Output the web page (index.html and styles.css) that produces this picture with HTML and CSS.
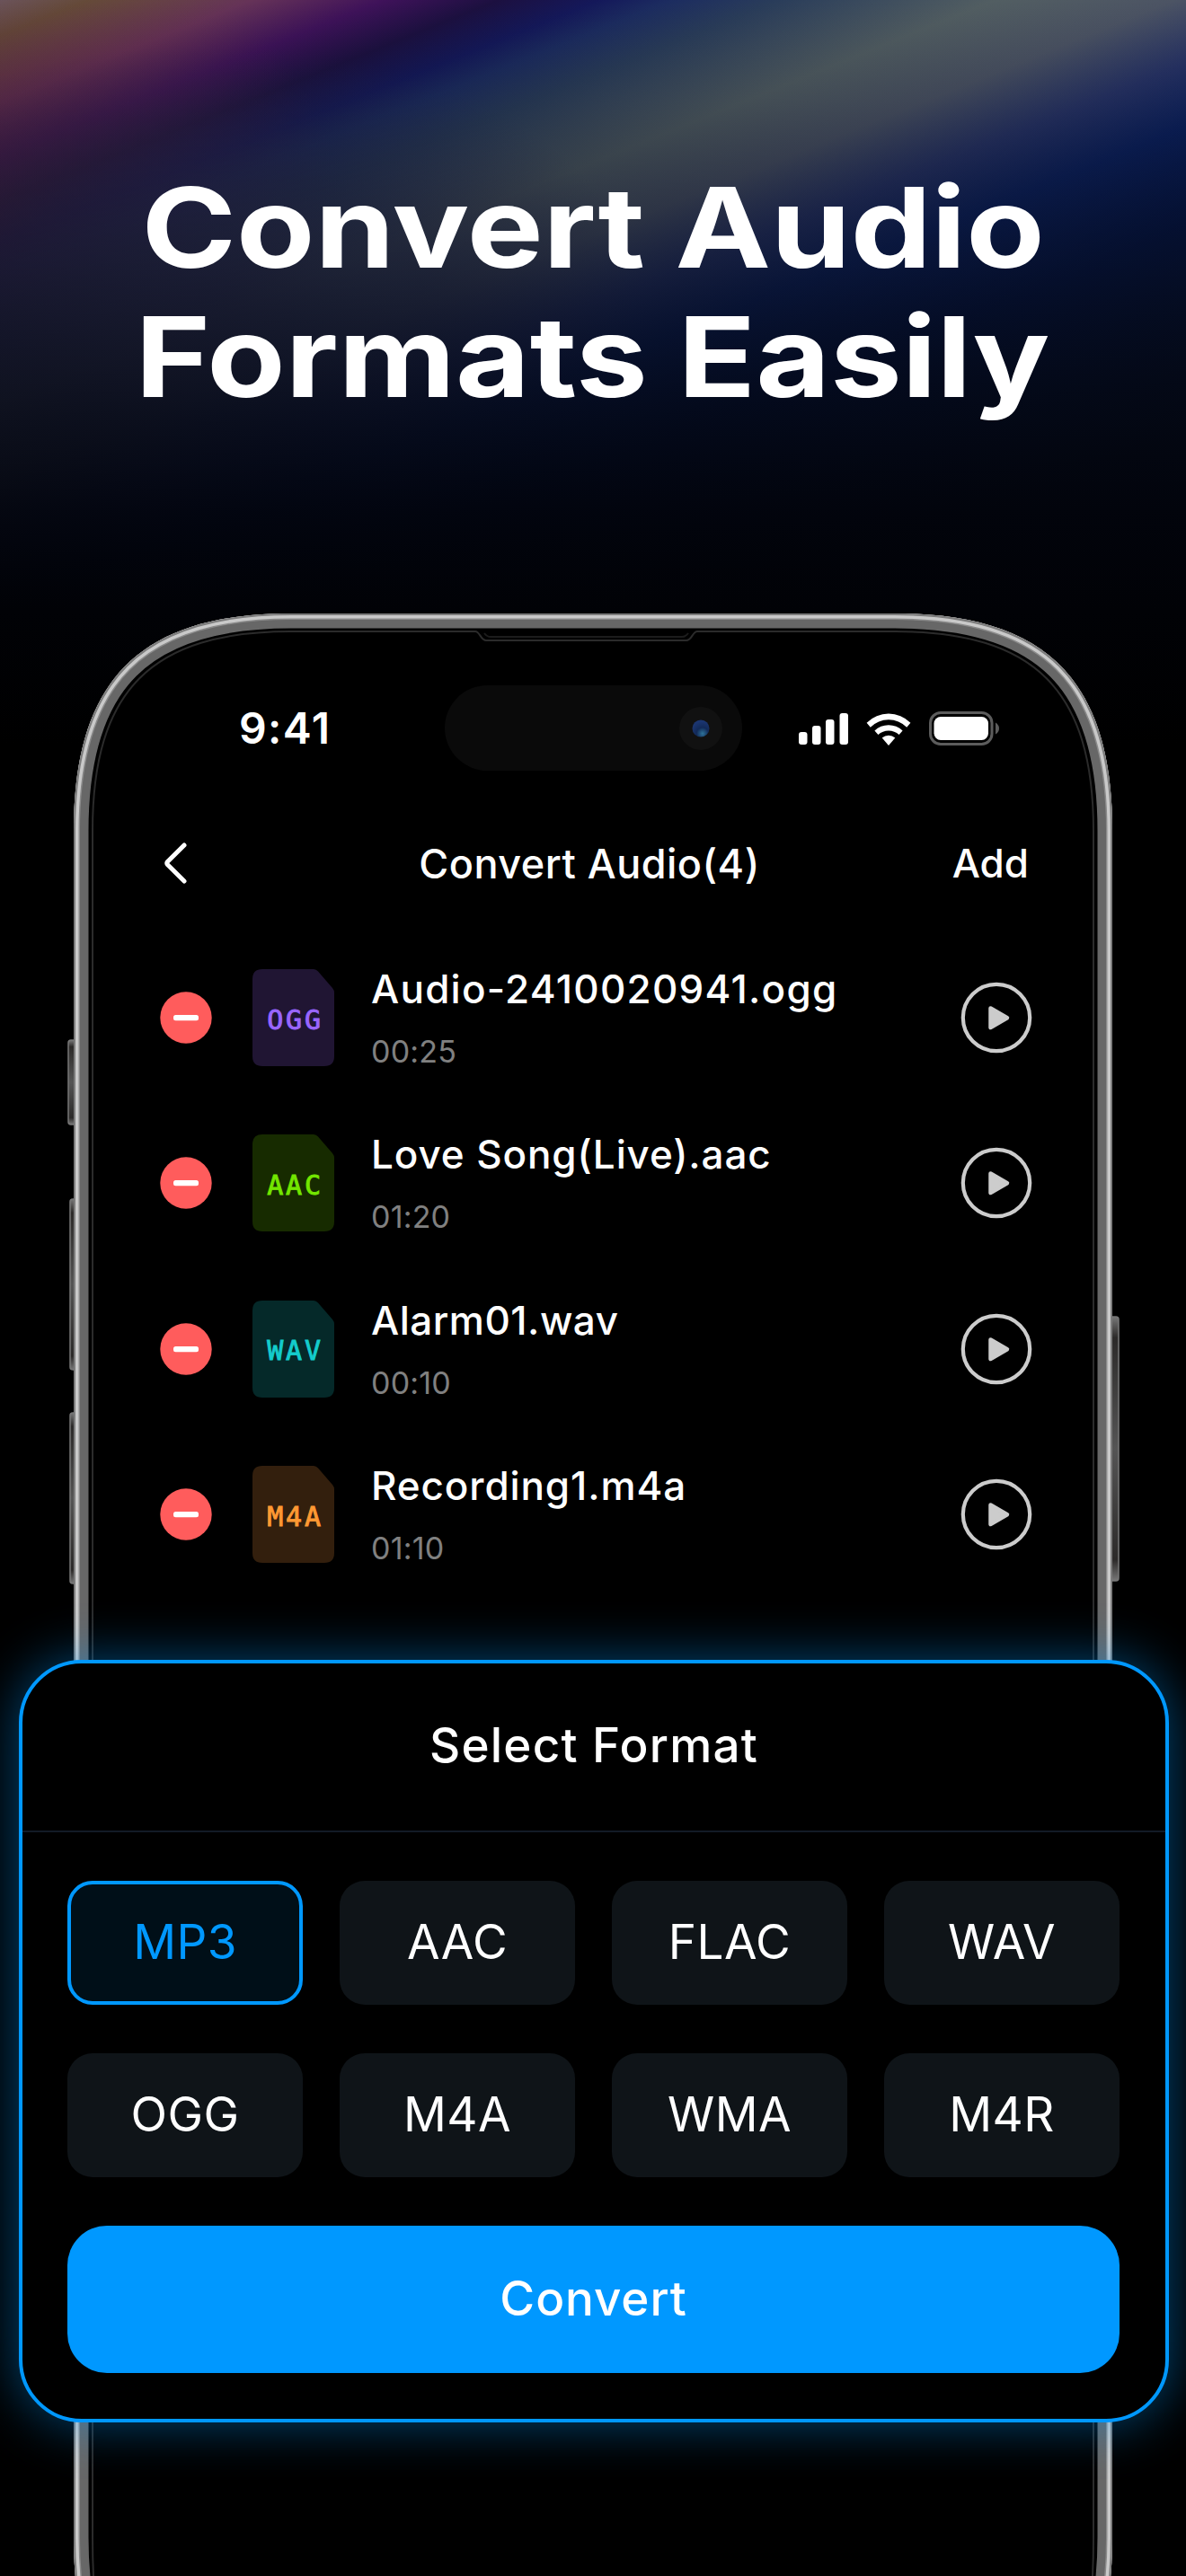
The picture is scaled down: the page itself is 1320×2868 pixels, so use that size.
FILE: index.html
```html
<!DOCTYPE html>
<html lang="en">
<head>
    <meta charset="utf-8">
    <title>Convert Audio Formats Easily</title>
    <link rel="stylesheet" href="styles.css">
</head>
<body>
    <div class="page">
        <h1 class="headline">
            <span class="line">Convert Audio</span>
            <span class="line">Formats Easily</span>
        </h1>

        <main class="phone">
            <svg class="frame" viewBox="0 0 1176 2185" width="1176" height="2185" fill="none">
                <defs>
                    <path id="body" d="M10 242 C10 74 84 0 252 0 H924 C1092 0 1166 74 1166 242 V2142 C1166 2310 1092 2384 924 2384 H252 C84 2384 10 2310 10 2142 Z"/>
                    <clipPath id="bodyClip"><use href="#body"/></clipPath>
                    <linearGradient id="key" x1="0" y1="0" x2="0" y2="1">
                        <stop offset="0" stop-color="#777"/>
                        <stop offset="0.08" stop-color="#2c2a29"/>
                        <stop offset="0.5" stop-color="#555"/>
                        <stop offset="0.92" stop-color="#2c2a29"/>
                        <stop offset="1" stop-color="#777"/>
                    </linearGradient>
                </defs>
                <!-- side keys -->
                <g fill="url(#key)" stroke="#777" stroke-width="1.5">
                    <rect x="4" y="475" width="12" height="94" rx="3"/>
                    <rect x="6" y="652" width="12" height="190" rx="3"/>
                    <rect x="6" y="890" width="12" height="190" rx="3"/>
                    <rect x="1160" y="783" width="13" height="294" rx="3"/>
                </g>
                <!-- body edge, from the outside in -->
                <use href="#body" fill="#000"/>
                <g clip-path="url(#bodyClip)">
                    <use href="#body" stroke="#676767" stroke-width="33"/>
                    <use href="#body" stroke="#8a8a8a" stroke-width="14"/>
                    <use href="#body" stroke="#c9c9c9" stroke-width="11"/>
                    <use href="#body" stroke="#7c7c7c" stroke-width="4"/>
                </g>
                <path d="M32 2185 Q31 2165 31 2142 V242 C31 86 96 20 252 20 H457 C462 20 463 30 469 30 H692 C698 30 699 20 704 20 H924 C1080 20 1145 86 1145 242 V2142 Q1145 2165 1144 2185" stroke="#2b2b2b" stroke-width="2"/>
                <path d="M467 22 Q470 26 474 26 H687 Q691 26 694 22" stroke="#1c1c1c" stroke-width="2"/>
            </svg>

            <div class="status">
                <span class="time">9:41</span>
                <div class="island">
                    <svg viewBox="0 0 48 48" width="48" height="48">
                        <defs>
                            <radialGradient id="lens" cx="0.6" cy="0.8" r="0.7">
                                <stop offset="0" stop-color="#2e7399"/>
                                <stop offset="0.5" stop-color="#122a58"/>
                                <stop offset="1" stop-color="#1b3570"/>
                            </radialGradient>
                        </defs>
                        <circle cx="24" cy="24" r="24" fill="#111"/>
                        <circle cx="24" cy="24" r="9.5" fill="url(#lens)"/>
                    </svg>
                </div>
                <svg class="signals" viewBox="0 0 224 40" width="224" height="40" fill="#fff">
                    <rect x="1" y="24" width="9.5" height="14" rx="3"/>
                    <rect x="16" y="17" width="9.5" height="21" rx="3"/>
                    <rect x="31" y="10" width="9.5" height="28" rx="3"/>
                    <rect x="46.5" y="3" width="9.5" height="35" rx="3"/>
                    <g transform="translate(101 39)">
                        <path d="M0 0 L-7.3 -8.6 A11 11 0 0 1 7.3 -8.6 Z"/>
                        <path d="M-11.6 -12 L-15.6 -16.5 A22.5 22.5 0 0 1 15.6 -16.5 L11.6 -12 A17 17 0 0 0 -11.6 -12 Z"/>
                        <path d="M-20.2 -20.3 L-24.4 -25.3 A34.5 34.5 0 0 1 24.4 -25.3 L20.2 -20.3 A28.5 28.5 0 0 0 -20.2 -20.3 Z"/>
                    </g>
                    <rect x="147.5" y="2.5" width="68.5" height="35" rx="11.5" fill="none" stroke="#5c5c5c" stroke-width="3"/>
                    <rect x="151.5" y="7" width="60.5" height="26" rx="7.5"/>
                    <path d="M220 13.5 Q224 16 224 20 Q224 24 220 26.5 Z" fill="#5c5c5c"/>
                </svg>
            </div>

            <nav class="navbar">
                <svg viewBox="0 0 26 48" width="26" height="48" fill="none" stroke="#fff" stroke-width="5" stroke-linecap="round" stroke-linejoin="round">
                    <path d="M23 4 L4.6 22.2 Q3 24 4.6 25.8 L23 44"/>
                </svg>
                <span class="nav-title">Convert Audio(4)</span>
                <span class="add">Add</span>
            </nav>

            <svg class="symbols">
                <symbol id="remove" viewBox="0 0 58 58">
                    <circle cx="29" cy="29" r="28.7" fill="#ff5c5c"/>
                    <rect x="15" y="26" width="28" height="6.2" rx="2.5" fill="#fff"/>
                </symbol>
                <symbol id="file" viewBox="0 0 91 108">
                    <path d="M11 0 H68 Q71 0 73 2.5 L89 21 Q91 23.5 91 26 V97 Q91 108 80 108 H11 Q0 108 0 97 V11 Q0 0 11 0 Z" fill="currentColor"/>
                </symbol>
                <symbol id="play" viewBox="0 0 80 80">
                    <circle cx="40" cy="40" r="37.2" fill="none" stroke="#ccc" stroke-width="4.2"/>
                    <path d="M33.5 29.5 L52 40.2 L33.5 51 Z" fill="#ccc" stroke="#ccc" stroke-width="4.5" stroke-linejoin="round"/>
                </symbol>
            </svg>

            <ul class="files">
                <li class="file ogg">
                    <svg class="remove"><use href="#remove"/></svg>
                    <div class="badge"><svg><use href="#file"/></svg><span>OGG</span></div>
                    <div class="info"><p class="name">Audio-2410020941.ogg</p><p class="length">00:25</p></div>
                    <svg class="play"><use href="#play"/></svg>
                </li>
                <li class="file aac">
                    <svg class="remove"><use href="#remove"/></svg>
                    <div class="badge"><svg><use href="#file"/></svg><span>AAC</span></div>
                    <div class="info"><p class="name">Love Song(Live).aac</p><p class="length">01:20</p></div>
                    <svg class="play"><use href="#play"/></svg>
                </li>
                <li class="file wav">
                    <svg class="remove"><use href="#remove"/></svg>
                    <div class="badge"><svg><use href="#file"/></svg><span>WAV</span></div>
                    <div class="info"><p class="name">Alarm01.wav</p><p class="length">00:10</p></div>
                    <svg class="play"><use href="#play"/></svg>
                </li>
                <li class="file m4a">
                    <svg class="remove"><use href="#remove"/></svg>
                    <div class="badge"><svg><use href="#file"/></svg><span>M4A</span></div>
                    <div class="info"><p class="name">Recording1.m4a</p><p class="length">01:10</p></div>
                    <svg class="play"><use href="#play"/></svg>
                </li>
            </ul>

            <section class="sheet">
                <h2 class="sheet-title">Select Format</h2>
                <div class="formats">
                    <button class="format selected">MP3</button>
                    <button class="format">AAC</button>
                    <button class="format">FLAC</button>
                    <button class="format">WAV</button>
                    <button class="format">OGG</button>
                    <button class="format">M4A</button>
                    <button class="format">WMA</button>
                    <button class="format">M4R</button>
                </div>
                <button class="convert">Convert</button>
            </section>
        </main>
    </div>
</body>
</html>
```
FILE: styles.css
```css
* {
    box-sizing: border-box;
}

body {
    margin: 0;
    background: #000;
    color: #fff;
    font-family: Inter, "Liberation Sans", sans-serif;
}

.page {
    width: 1320px;
    height: 2868px;
    overflow: hidden;
    background:
        linear-gradient(180deg, rgba(10, 16, 32, 0) 0, rgba(10, 16, 32, 0.2) 110px, rgba(10, 16, 34, 0.4) 200px, rgba(9, 15, 32, 0.58) 290px, rgba(6, 11, 26, 0.74) 380px, rgba(4, 8, 20, 0.87) 470px, rgba(2, 4, 12, 0.95) 570px, #010206 680px, #000 830px),
        radial-gradient(ellipse 480px 280px at 230px 330px, rgba(44, 42, 78, 0.75), rgba(40, 40, 76, 0.5) 50%, rgba(34, 36, 72, 0)),
        radial-gradient(ellipse 420px 330px at -40px 240px, rgba(110, 35, 60, 0.6), rgba(90, 30, 60, 0)),
        linear-gradient(158deg, #6a5c60 0, #645038 37px, #663358 105px, #3f125a 160px, #1c1040 208px, #14185a 250px, #1c2c60 280px, #2a3d5a 325px, #525e62 415px, #4c5464 490px, #283468 560px, #0a2060 625px, #001040 730px, #000308 940px);
    background-size: 1320px 830px;
    background-repeat: no-repeat;
}

.headline {
    display: flex;
    flex-direction: column;
    align-items: center;
    height: 683px;
    margin: 0;
    padding-top: 181px;
    font-size: 124px;
    font-weight: 750;
    line-height: 144px;
}

.line {
    transform: scaleX(1.15);
    white-space: nowrap;
}

.phone {
    position: relative;
    height: 2185px;
    margin: 0 82px;
    padding-top: 80px;
}

.frame {
    position: absolute;
    top: 0;
    left: -10px;
}

.status {
    position: relative;
    display: grid;
    grid-template-columns: 413px 331px 1fr;
    align-items: center;
    height: 95px;
}

.time {
    padding-left: 184px;
    font-size: 48px;
    font-weight: 580;
    letter-spacing: 1.4px;
    line-height: 60px;
}

.island {
    display: flex;
    align-items: center;
    justify-content: flex-end;
    height: 95px;
    padding-right: 22px;
    border-radius: 48px;
    background: #0a0a0a;
}

.signals {
    margin-left: 62px;
}

.navbar {
    position: relative;
    display: grid;
    grid-template-columns: 150px 1fr 150px;
    align-items: center;
    height: 60px;
    margin: 73px 93px 0 100px;
    font-size: 45px;
    font-weight: 500;
}

.nav-title {
    padding-right: 15px;
    letter-spacing: 0.5px;
    text-align: center;
}

.add {
    font-size: 44px;
    text-align: right;
}

.symbols {
    position: absolute;
    width: 0;
    height: 0;
}

.files {
    position: relative;
    margin: 50px 89px 0 96px;
    padding: 0;
    list-style: none;
}

.file {
    display: grid;
    grid-template-columns: 58px 91px 1fr 80px;
    align-items: center;
    height: 184.3px;
}

.remove {
    width: 58px;
    height: 58px;
}

.play {
    width: 80px;
    height: 80px;
}

.badge {
    display: grid;
    place-items: center;
    width: 91px;
    height: 108px;
    margin-left: 45px;
}

.badge svg,
.badge span {
    grid-area: 1 / 1;
}

.badge svg {
    width: 91px;
    height: 108px;
}

.badge span {
    padding: 4px 0 0 4px;
    font: 30px "DejaVu Sans Mono", monospace;
    letter-spacing: 2.8px;
    -webkit-text-stroke: 0.9px;
}

.info {
    padding: 6px 0 0 86px;
}

.name,
.length {
    margin: 0;
    line-height: 69px;
    white-space: nowrap;
}

.name {
    font-size: 44px;
    font-weight: 500;
    letter-spacing: 0.9px;
}

.length {
    color: #808080;
    font-size: 34px;
    letter-spacing: 0.2px;
}

.ogg svg {
    color: #201533;
}

.ogg span {
    color: #9966ff;
}

.ogg .name {
    letter-spacing: 1.25px;
}

.aac svg {
    color: #172b00;
}

.aac span {
    color: #73e600;
}

.wav svg {
    color: #052929;
}

.wav span {
    color: #14cccc;
}

.wav .name {
    letter-spacing: 0.5px;
}

.m4a svg {
    color: #331f0d;
}

.m4a span {
    color: #ff9933;
}

.sheet {
    position: relative;
    height: 849px;
    margin: 70px -63px 0 -61px;
    padding: 0 50px;
    border: 4px solid #0098ff;
    border-radius: 70px;
    background: #000;
    box-shadow: 0 0 58px rgba(0, 152, 255, 0.47);
}

.sheet-title {
    height: 188px;
    margin: 0 -50px;
    border-bottom: 2px solid #131b26;
    font-size: 53px;
    font-weight: 500;
    letter-spacing: 1.2px;
    line-height: 183px;
    text-align: center;
}

.formats {
    display: grid;
    grid-template-columns: repeat(4, 262px);
    gap: 54px 41px;
    margin-top: 54px;
}

.format {
    height: 138px;
    padding: 0 0 3px;
    border: 0;
    border-radius: 28px;
    background: #0f1418;
    color: #fff;
    font: 400 53px Inter, sans-serif;
    letter-spacing: 0.4px;
}

.format.selected {
    border: 4px solid #0098ff;
    background: #000f18;
    color: #0098ff;
}

.convert {
    width: 1171px;
    height: 164px;
    margin-top: 54px;
    padding: 0 0 3px;
    border: 0;
    border-radius: 44px;
    background: #0098ff;
    color: #fff;
    font: 500 53px Inter, sans-serif;
    letter-spacing: 0.9px;
}
```
